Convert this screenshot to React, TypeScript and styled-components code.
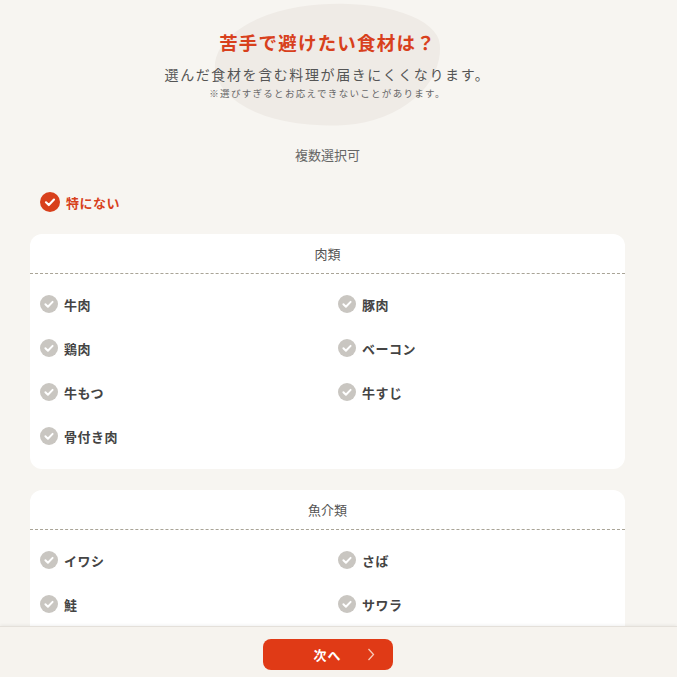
import styled, { createGlobalStyle } from 'styled-components'

const GlobalStyle = createGlobalStyle`
  html, body {
    margin: 0;
    padding: 0;
    background: #f7f5f1;
    font-family: "Noto Sans CJK JP", "Noto Sans", sans-serif;
    color: #333;
  }
`

const Page = styled.div`
  width: 655px;
  padding: 0 30px 80px;
  box-sizing: border-box;
`

const Intro = styled.header`
  position: relative;
  display: flex;
  flex-direction: column;
  align-items: center;
  padding-top: 28px;
`

const Blob = styled.div`
  position: absolute;
  top: 4px;
  left: 50%;
  width: 226px;
  height: 122px;
  transform: translateX(-50%) rotate(-4deg);
  background: #efebe6;
  border-radius: 48% 52% 44% 56% / 46% 40% 60% 54%;
  z-index: 0;
`

const Title = styled.h1`
  position: relative;
  margin: 0;
  font-size: 18.5px;
  font-weight: 700;
  line-height: 28px;
  letter-spacing: 1.2px;
  color: #d8401c;
`

const Lead = styled.p`
  position: relative;
  margin: 8px 0 0;
  font-size: 14px;
  line-height: 20px;
  letter-spacing: 1.6px;
  color: #555;
`

const Note = styled.p`
  position: relative;
  margin: 2px 0 0;
  font-size: 9.5px;
  line-height: 14px;
  letter-spacing: 1.3px;
  color: #666;
`

const Multi = styled.p`
  margin: 46px 0 0;
  text-align: center;
  font-size: 13px;
  line-height: 18px;
  color: #666;
`

const NoneRow = styled.div`
  display: flex;
  align-items: center;
  gap: 6px;
  margin: 27px 0 0 10px;
  height: 22px;
`

const Label = styled.span<{ $active?: boolean }>`
  font-size: 13px;
  font-weight: 700;
  color: ${({ $active }) => ($active ? '#d8401c' : '#444')};
  letter-spacing: 0.5px;
`

const Card = styled.section`
  background: #fff;
  border-radius: 12px;
  margin-top: 21px;
  padding-bottom: 11px;
  &:first-of-type {
    margin-top: 21px;
  }
`

const CardHead = styled.div`
  height: 39px;
  display: flex;
  align-items: center;
  justify-content: center;
  font-size: 13px;
  color: #555;
  border-bottom: 1px dashed #a9a497;
`

const Grid = styled.div`
  display: grid;
  grid-template-columns: 298px 1fr;
  grid-auto-rows: 44px;
  padding: 8px 10px 0;
`

const Item = styled.div`
  display: flex;
  align-items: center;
  gap: 6px;
`

const Footer = styled.footer`
  position: fixed;
  left: 0;
  right: 0;
  bottom: 0;
  height: 50px;
  background: #f6f3ee;
  border-top: 1px solid #e4e0da;
  box-shadow: 0 -1px 3px rgba(0, 0, 0, 0.06);
`

const FooterInner = styled.div`
  width: 655px;
  height: 100%;
  display: flex;
  justify-content: center;
  align-items: center;
`

const NextButton = styled.button`
  position: relative;
  width: 130px;
  height: 31px;
  border: 0;
  border-radius: 8px;
  background: #e03a16;
  color: #fff;
  font-family: inherit;
  font-size: 13px;
  font-weight: 700;
  letter-spacing: 1px;
  display: flex;
  align-items: center;
  justify-content: center;
  margin-top: 5px;
  cursor: pointer;
  svg {
    position: absolute;
    right: 18px;
    top: 9px;
  }
`

const Check = ({ active }: { active?: boolean }) => (
  <svg width={active ? 20 : 18} height={active ? 20 : 18} viewBox="0 0 20 20">
    <circle cx="10" cy="10" r="10" fill={active ? '#d8401c' : '#c9c6c1'} />
    <path
      d="M6 10.3 L8.8 13 L14 7.6"
      fill="none"
      stroke="#fff"
      strokeWidth="2.2"
      strokeLinecap="round"
      strokeLinejoin="round"
    />
  </svg>
)

const groups = [
  { name: '肉類', items: ['牛肉', '豚肉', '鶏肉', 'ベーコン', '牛もつ', '牛すじ', '骨付き肉'] },
  { name: '魚介類', items: ['イワシ', 'さば', '鮭', 'サワラ', 'あじ', 'ぶり'] },
]

export default function App() {
  return (
    <>
      <GlobalStyle />
      <Page>
        <Intro>
          <Blob />
          <Title>苦手で避けたい食材は？</Title>
          <Lead>選んだ食材を含む料理が届きにくくなります。</Lead>
          <Note>※選びすぎるとお応えできないことがあります。</Note>
        </Intro>
        <Multi>複数選択可</Multi>
        <NoneRow>
          <Check active />
          <Label $active>特にない</Label>
        </NoneRow>
        {groups.map((g) => (
          <Card key={g.name}>
            <CardHead>{g.name}</CardHead>
            <Grid>
              {g.items.map((it) => (
                <Item key={it}>
                  <Check />
                  <Label>{it}</Label>
                </Item>
              ))}
            </Grid>
          </Card>
        ))}
      </Page>
      <Footer>
        <FooterInner>
          <NextButton>
            次へ
            <svg width="8" height="13" viewBox="0 0 8 13">
              <path d="M1.5 1 L6.5 6.5 L1.5 12" fill="none" stroke="#f7c9b8" strokeWidth="1.3" />
            </svg>
          </NextButton>
        </FooterInner>
      </Footer>
    </>
  )
}
